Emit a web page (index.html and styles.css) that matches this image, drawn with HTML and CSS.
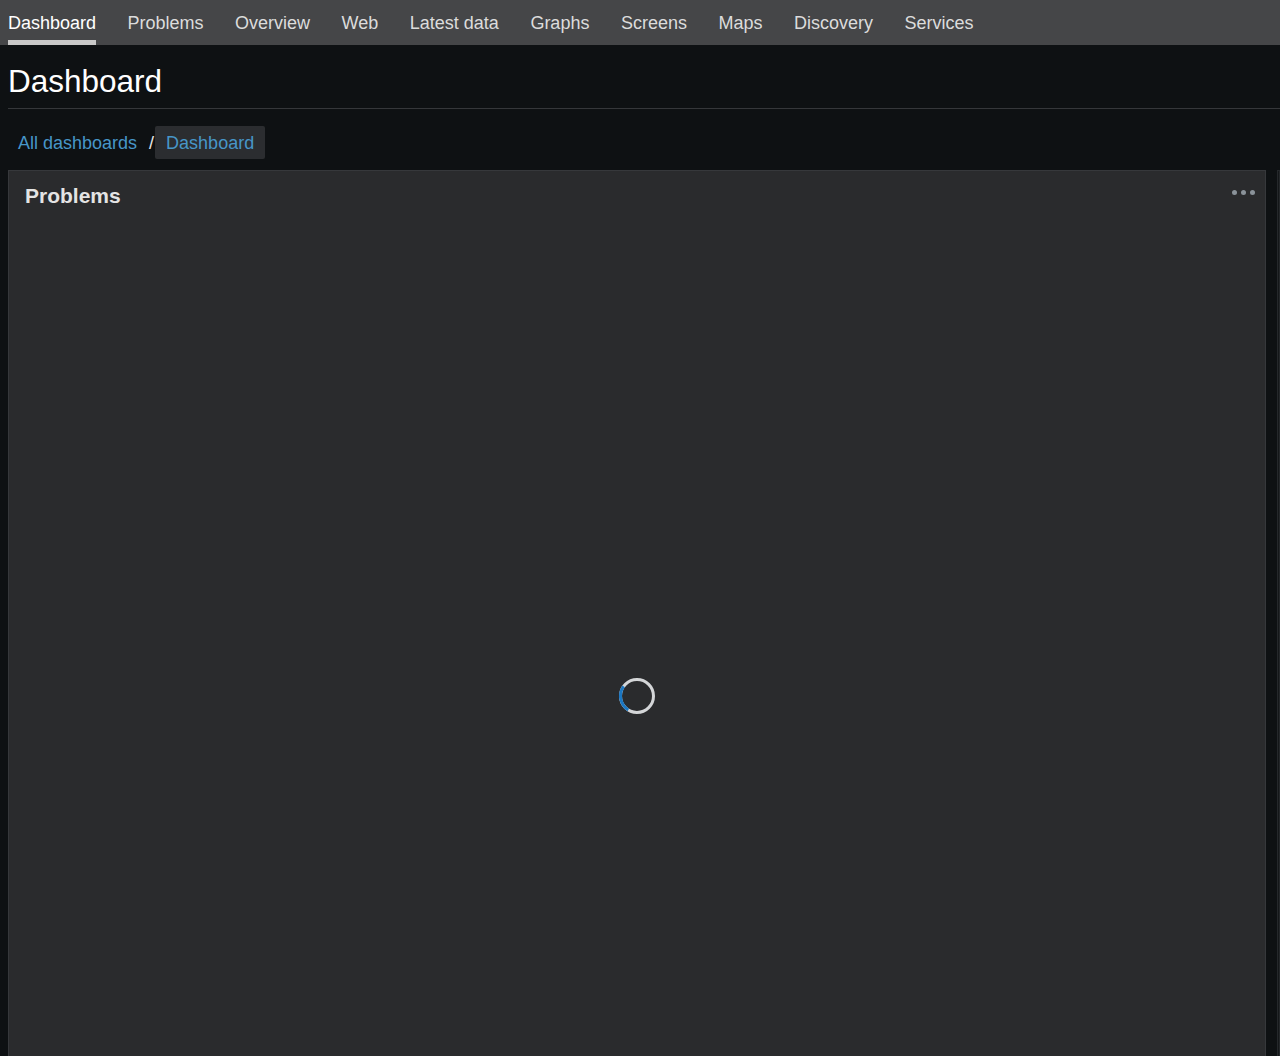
FILE: index.html
```html
<!DOCTYPE html>
<html>
<head>
<meta charset="utf-8">
<link rel="stylesheet" href="styles.css">
</head>
<body>
<nav class="topnav">
  <a class="tab active">Dashboard</a>
  <a class="tab">Problems</a>
  <a class="tab">Overview</a>
  <a class="tab">Web</a>
  <a class="tab">Latest data</a>
  <a class="tab">Graphs</a>
  <a class="tab">Screens</a>
  <a class="tab">Maps</a>
  <a class="tab">Discovery</a>
  <a class="tab">Services</a>
</nav>
<header class="page-header">
  <h1 class="title">Dashboard</h1>
</header>
<div class="breadcrumbs">
  <a class="crumb">All dashboards</a>
  <span class="sep">/</span>
  <span class="crumb current">Dashboard</span>
</div>
<main class="grid">
  <section class="widget">
    <div class="widget-head">
      <h2 class="widget-title">Problems</h2>
      <button class="menu-btn" aria-label="menu"><span></span><span></span><span></span></button>
    </div>
    <div class="widget-body">
      <svg class="spinner" width="40" height="40" viewBox="0 0 40 40">
        <circle cx="20" cy="20" r="16.5" fill="none" stroke="#d4d6d8" stroke-width="3"/>
        <circle cx="20" cy="20" r="16.5" fill="none" stroke="#1b77c2" stroke-width="3" stroke-dasharray="27 200" transform="rotate(122 20 20)"/>
      </svg>
    </div>
  </section>
  <section class="widget side"></section>
</main>
</body>
</html>
```

FILE: styles.css
```css
html, body {
  margin: 0;
  padding: 0;
  height: 100%;
  overflow: hidden;
}
body {
  background: #0e1113;
  font-family: "Liberation Sans", Arial, Helvetica, sans-serif;
  color: #e6e6e6;
}
.topnav {
  display: flex;
  gap: 31.5px;
  height: 45px;
  background: #454648;
  padding: 0 8px;
  box-sizing: border-box;
}
.tab {
  display: block;
  font-size: 18px;
  line-height: 46px;
  color: #dcdcdc;
  position: relative;
  text-decoration: none;
}
.tab.active {
  color: #ffffff;
}
.tab.active::after {
  content: "";
  position: absolute;
  left: 0;
  right: 0;
  bottom: 0;
  height: 5px;
  background: #c9c9c9;
}
.page-header {
  margin-left: 8px;
  height: 63px;
  border-bottom: 1px solid #35373a;
}
.title {
  margin: 0;
  font-weight: normal;
  font-size: 31.5px;
  line-height: 72px;
  color: #ffffff;
}
.breadcrumbs {
  display: flex;
  align-items: flex-start;
  height: 33px;
  margin-top: 17px;
  padding-left: 18px;
  font-size: 18px;
  line-height: 35px;
}
.crumb {
  color: #4796c8;
}
.sep {
  color: #e8e8e8;
  margin: 0 1px 0 12px;
}
.crumb.current {
  background: #2b2d30;
  border-radius: 2px;
  padding: 0 11px;
  height: 33px;
}
.grid {
  display: flex;
  gap: 11px;
  margin-top: 11px;
  padding-left: 8px;
  height: 886px;
}
.widget {
  flex: 0 0 1258px;
  box-sizing: border-box;
  background: #2a2b2d;
  border: 1px solid #36383b;
  border-bottom: 0;
  display: flex;
  flex-direction: column;
}
.widget.side {
  flex: 1 1 auto;
  min-width: 0;
  background: #15181a;
  border-color: #25282b;
}
.widget-head {
  flex: 0 0 48px;
  display: flex;
  align-items: center;
  justify-content: space-between;
  padding: 0 10px 0 16px;
}
.widget-title {
  margin: 0;
  font-size: 21px;
  font-weight: bold;
  color: #e4e4e4;
  padding-top: 1px;
}
.menu-btn {
  display: flex;
  gap: 4px;
  background: none;
  border: 0;
  padding: 0;
  margin-top: -5px;
}
.menu-btn span {
  width: 5px;
  height: 5px;
  border-radius: 50%;
  background: #8a9299;
}
.widget-body {
  flex: 1 1 auto;
  min-height: 0;
  display: flex;
  align-items: flex-start;
  justify-content: center;
}
.spinner {
  margin-top: 457px;
}
```
